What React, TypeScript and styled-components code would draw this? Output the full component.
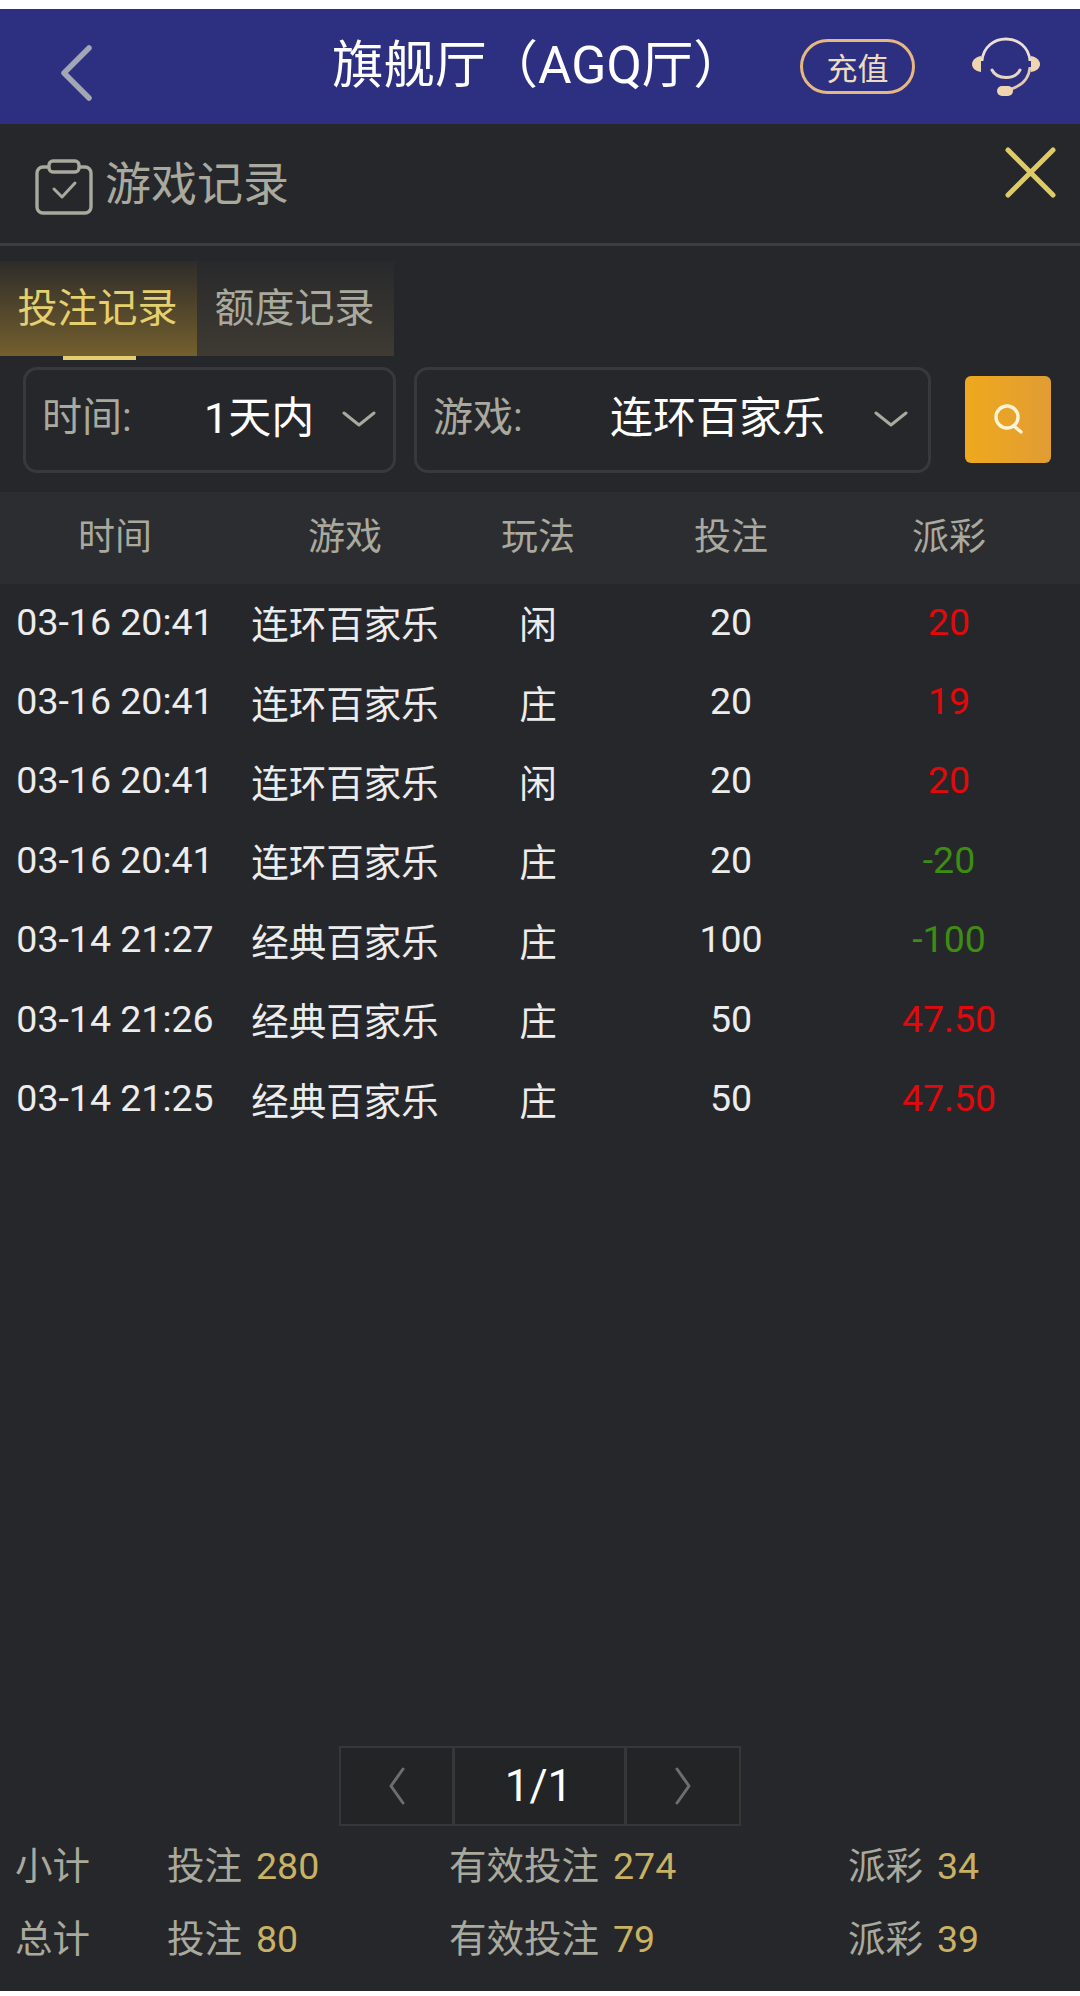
import React from "react";
import styled, { createGlobalStyle } from "styled-components";

const GlobalStyle = createGlobalStyle`
    html, body {
        margin: 0;
        padding: 0;
        background: #ffffff;
    }
    * {
        box-sizing: border-box;
    }
`;

type GameRecord = {
    time: string;
    game: string;
    play: string;
    bet: string;
    payout: string;
    win: boolean;
};

const RECORDS: GameRecord[] = [
    { time: "03-16 20:41", game: "连环百家乐", play: "闲", bet: "20", payout: "20", win: true },
    { time: "03-16 20:41", game: "连环百家乐", play: "庄", bet: "20", payout: "19", win: true },
    { time: "03-16 20:41", game: "连环百家乐", play: "闲", bet: "20", payout: "20", win: true },
    { time: "03-16 20:41", game: "连环百家乐", play: "庄", bet: "20", payout: "-20", win: false },
    { time: "03-14 21:27", game: "经典百家乐", play: "庄", bet: "100", payout: "-100", win: false },
    { time: "03-14 21:26", game: "经典百家乐", play: "庄", bet: "50", payout: "47.50", win: true },
    { time: "03-14 21:25", game: "经典百家乐", play: "庄", bet: "50", payout: "47.50", win: true },
];

const SUMMARY = [
    { label: "小计", bet: "280", valid: "274", payout: "34" },
    { label: "总计", bet: "80", valid: "79", payout: "39" },
];

const Chevron: React.FC = () => (
    <ChevronWrap>
        <svg width="34" height="18" viewBox="0 0 34 18" fill="none">
            <path d="M2 3 L17 15 L32 3" stroke="#a9a99e" strokeWidth="3" strokeLinecap="round" strokeLinejoin="round" />
        </svg>
    </ChevronWrap>
);

const App: React.FC = () => {
    return (
        <Page>
            <GlobalStyle />
            <Header>
                <BackButton>
                    <svg width="36" height="56" viewBox="0 0 36 56" fill="none">
                        <path d="M31 3 L6 28 L31 53" stroke="#a3a6b4" strokeWidth="5.5" strokeLinecap="round" strokeLinejoin="round" />
                    </svg>
                </BackButton>
                <HeaderTitle>旗舰厅（AGQ厅）</HeaderTitle>
                <Recharge>充值</Recharge>
                <ServiceIcon>
                    <svg width="68" height="60" viewBox="0 0 68 60" fill="none">
                        <path d="M10 24 C11 10 22 2 34 2 C46 2 57 10 58 24" stroke="#ece0d6" strokeWidth="2.8" />
                        <path d="M58 30 C57 42 49 50 35 53" stroke="#e4c9ae" strokeWidth="2.8" />
                        <path d="M20 33 C25 43 43 43 48 33" stroke="#e8d5c6" strokeWidth="3" strokeLinecap="round" />
                        <path d="M9 19 C3 20 0 24 0 27 C0 31 3 34 9 35 Z" fill="#efd6b0" />
                        <path d="M59 19 C65 20 68 24 68 27 C68 31 65 34 59 35 Z" fill="#efd6b0" />
                        <rect x="25" y="49" width="16" height="10" rx="5" fill="#efd6b0" />
                    </svg>
                </ServiceIcon>
            </Header>

            <Body>
                <TitleBar>
                    <svg width="60" height="56" viewBox="0 0 60 56" fill="none">
                        <rect x="2" y="8" width="54" height="46" rx="6" stroke="#a9a99e" strokeWidth="3.4" />
                        <rect x="14" y="2" width="30" height="11" rx="4" fill="#26272a" stroke="#a9a99e" strokeWidth="3.4" />
                        <path d="M19 30 L27 38 L40 24" stroke="#a9a99e" strokeWidth="3" strokeLinecap="round" strokeLinejoin="round" />
                    </svg>
                    <TitleText>游戏记录</TitleText>
                    <CloseIcon>
                        <svg width="51" height="51" viewBox="0 0 51 51" fill="none">
                            <path d="M3 3 L48 48 M48 3 L3 48" stroke="#dfcb62" strokeWidth="5" strokeLinecap="round" />
                        </svg>
                    </CloseIcon>
                </TitleBar>

                <Tabs>
                    <Tab $active>投注记录</Tab>
                    <Tab>额度记录</Tab>
                </Tabs>

                <Filters>
                    <SelectBox $width={373} $paddingRight={17}>
                        <SelectLabel $width={162}>时间:</SelectLabel>
                        <SelectValue>1天内</SelectValue>
                        <Chevron />
                    </SelectBox>
                    <SelectBox $width={517} $paddingRight={20}>
                        <SelectLabel $width={177}>游戏:</SelectLabel>
                        <SelectValue>连环百家乐</SelectValue>
                        <Chevron />
                    </SelectBox>
                    <SearchButton>
                        <svg width="36" height="36" viewBox="0 0 36 36" fill="none">
                            <circle cx="17" cy="16" r="11" stroke="#fff3d8" strokeWidth="3.4" />
                            <path d="M24 25 L31 31" stroke="#fff3d8" strokeWidth="3.4" strokeLinecap="round" />
                        </svg>
                    </SearchButton>
                </Filters>

                <TableHead>
                    <HeadCell>时间</HeadCell>
                    <HeadCell>游戏</HeadCell>
                    <HeadCell>玩法</HeadCell>
                    <HeadCell>投注</HeadCell>
                    <HeadCell>派彩</HeadCell>
                </TableHead>

                <Rows>
                    {RECORDS.map((record, i) => (
                        <Row key={i}>
                            <Cell>{record.time}</Cell>
                            <Cell>{record.game}</Cell>
                            <Cell>{record.play}</Cell>
                            <Cell>{record.bet}</Cell>
                            <Payout $win={record.win}>{record.payout}</Payout>
                        </Row>
                    ))}
                </Rows>

                <Pager>
                    <PagerArrow>
                        <svg width="20" height="38" viewBox="0 0 20 38" fill="none">
                            <path d="M16 2 L4 19 L16 36" stroke="#6d6e70" strokeWidth="3" strokeLinecap="round" strokeLinejoin="round" />
                        </svg>
                    </PagerArrow>
                    <PagerCount>1/1</PagerCount>
                    <PagerArrow>
                        <svg width="20" height="38" viewBox="0 0 20 38" fill="none">
                            <path d="M4 2 L16 19 L4 36" stroke="#6d6e70" strokeWidth="3" strokeLinecap="round" strokeLinejoin="round" />
                        </svg>
                    </PagerArrow>
                </Pager>

                <Summary>
                    {SUMMARY.map((item) => (
                        <SummaryRow key={item.label}>
                            <SummaryLabel>{item.label}</SummaryLabel>
                            <SummaryLabel>
                                投注<SummaryValue>{item.bet}</SummaryValue>
                            </SummaryLabel>
                            <SummaryLabel>
                                有效投注<SummaryValue>{item.valid}</SummaryValue>
                            </SummaryLabel>
                            <SummaryLabel>
                                派彩<SummaryValue>{item.payout}</SummaryValue>
                            </SummaryLabel>
                        </SummaryRow>
                    ))}
                </Summary>
            </Body>
        </Page>
    );
};

export default App;

const Page = styled.div`
    width: 1080px;
    height: 1996px;
    padding: 9px 0 5px;
    display: flex;
    flex-direction: column;
    overflow: hidden;
    background: #ffffff;
    font-family: Roboto, "Noto Sans CJK SC", sans-serif;
`;

const Header = styled.div`
    flex: none;
    height: 115px;
    padding: 0 40px 0 58px;
    display: flex;
    align-items: center;
    background-color: #2d2f80;
`;

const BackButton = styled.div`
    margin-top: 12px;
    line-height: 0;
`;

const HeaderTitle = styled.div`
    margin: -12px 0 0 238px;
    color: #ffffff;
    font-size: 51.5px;
    white-space: nowrap;
`;

const Recharge = styled.div`
    width: 115px;
    height: 55px;
    margin: 0 0 0 auto;
    display: flex;
    align-items: center;
    justify-content: center;
    border: 3px solid #e6b87f;
    border-radius: 28px;
    color: #efdcc0;
    font-size: 31px;
`;

const ServiceIcon = styled.div`
    margin-left: 57px;
    line-height: 0;
`;

const Body = styled.div`
    flex: 1;
    display: flex;
    flex-direction: column;
    background-color: #26272a;
`;

const TitleBar = styled.div`
    flex: none;
    height: 122px;
    padding: 35px 24px 0 35px;
    display: flex;
    align-items: flex-start;
    gap: 10px;
    border-bottom: 3px solid #3c3d3e;
`;

const TitleText = styled.div`
    color: #a9a99e;
    font-size: 46px;
    line-height: 50px;
`;

const CloseIcon = styled.div`
    margin: -12px 0 0 auto;
    line-height: 0;
`;

const Tabs = styled.div`
    flex: none;
    margin-top: 15px;
    display: flex;
`;

const Tab = styled.div<{ $active?: boolean }>`
    position: relative;
    width: 197px;
    height: 95px;
    padding: 23px 2px 0 0;
    text-align: center;
    font-size: 40px;
    line-height: 50px;
    color: ${({ $active }) => ($active ? "#e5cf6e" : "#a9a99e")};
    background: ${({ $active }) =>
        $active
            ? "linear-gradient(180deg, #2e2c2a 0%, #74602e 100%)"
            : "linear-gradient(180deg, #28292b 0%, #3f3b33 100%)"};
    ${({ $active }) =>
        $active &&
        `
        &::after {
            content: "";
            position: absolute;
            left: 63px;
            bottom: -4px;
            width: 73px;
            height: 4px;
            background: #e5cf6e;
        }
    `}
`;

const Filters = styled.div`
    flex: none;
    margin-top: 11px;
    padding-left: 23px;
    display: flex;
    align-items: center;
    gap: 18px;
`;

const SelectBox = styled.div<{ $width: number; $paddingRight: number }>`
    width: ${({ $width }) => $width}px;
    height: 106px;
    padding: 25px ${({ $paddingRight }) => $paddingRight}px 0 16px;
    display: flex;
    align-items: flex-start;
    border: 3px solid #38393b;
    border-radius: 14px;
`;

const SelectLabel = styled.span<{ $width: number }>`
    flex: none;
    width: ${({ $width }) => $width}px;
    color: #a9a99e;
    font-size: 40px;
    line-height: 46px;
`;

const SelectValue = styled.span`
    color: #ffffff;
    font-size: 43px;
    line-height: 46px;
    white-space: nowrap;
`;

const ChevronWrap = styled.span`
    margin: 15px 0 0 auto;
    line-height: 0;
`;

const SearchButton = styled.div`
    width: 86px;
    height: 87px;
    margin-left: 16px;
    margin-top: -2px;
    display: flex;
    align-items: center;
    justify-content: center;
    border-radius: 6px;
    background: linear-gradient(90deg, #efa91c 0%, #e19c35 100%);
`;

const TableHead = styled.div`
    flex: none;
    height: 92px;
    margin-top: 19px;
    padding-bottom: 8px;
    display: grid;
    grid-template-columns: 230px 230px 156px 230px 206px 28px;
    align-items: center;
    background-color: #2c2d30;
`;

const HeadCell = styled.div`
    text-align: center;
    color: #a9a99e;
    font-size: 37px;
`;

const Rows = styled.div`
    flex: 1;
    display: flex;
    flex-direction: column;
`;

const Row = styled.div`
    height: 79.4px;
    padding-bottom: 4px;
    display: grid;
    grid-template-columns: 230px 230px 156px 230px 206px 28px;
    align-items: center;
`;

const Cell = styled.div`
    text-align: center;
    color: #ececec;
    font-size: 37.5px;
    white-space: nowrap;
`;

const Payout = styled(Cell)<{ $win: boolean }>`
    color: ${({ $win }) => ($win ? "#e0090c" : "#3c8d12")};
`;

const Pager = styled.div`
    flex: none;
    align-self: center;
    width: 402px;
    height: 80px;
    display: grid;
    grid-template-columns: 111px 175px 1fr;
    border: 2px solid #363739;
    background-color: #222425;
`;

const PagerArrow = styled.div`
    display: flex;
    align-items: center;
    justify-content: center;
`;

const PagerCount = styled.div`
    padding-right: 2px;
    display: flex;
    align-items: center;
    justify-content: center;
    border-left: 3px solid #363739;
    border-right: 3px solid #363739;
    color: #ffffff;
    font-size: 44px;
`;

const Summary = styled.div`
    flex: none;
    height: 165px;
    padding-left: 15px;
    display: flex;
    flex-direction: column;
`;

const SummaryRow = styled.div`
    height: 73.5px;
    margin-top: -0.5px;
    display: grid;
    grid-template-columns: 152px 282px 399px 1fr;
    align-items: center;
`;

const SummaryLabel = styled.div`
    color: #a9a99e;
    font-size: 37.5px;
    white-space: nowrap;
`;

const SummaryValue = styled.span`
    margin-left: 14px;
    color: #c9b264;
`;
